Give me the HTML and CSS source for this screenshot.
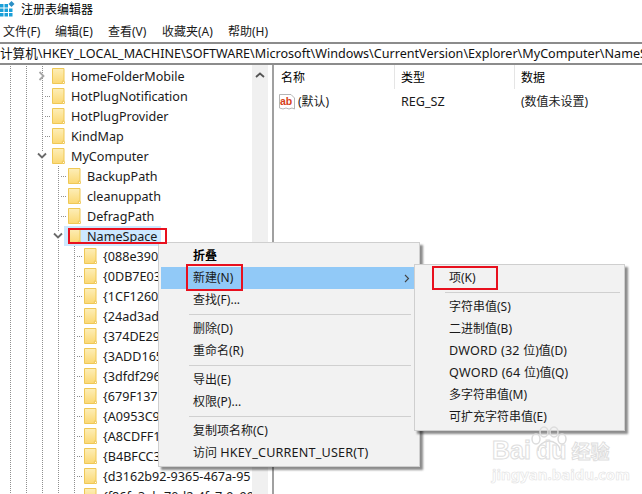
FILE: index.html
```html
<!DOCTYPE html>
<html lang="zh-CN">
<head>
<meta charset="utf-8">
<title>注册表编辑器</title>
<link rel="stylesheet" href="styles.css">
</head>
<body>
<svg class="defs" width="0" height="0" aria-hidden="true">
  <defs>
    <linearGradient id="fg" x1="0" y1="0" x2="0" y2="1">
      <stop offset="0" stop-color="#fdeeb8"/>
      <stop offset="1" stop-color="#fbd874"/>
    </linearGradient>
    <symbol id="folder" viewBox="0 0 13 16">
      <path d="M.5.5h11.5v12.8h-1.6v2.2H.5z" fill="url(#fg)" stroke="#efc855"/>
      <path d="M10.4 15.5v-2.2h2v2.2z" fill="#fff" stroke="#efc855"/>
    </symbol>
    <symbol id="chev-r" viewBox="0 0 8 10">
      <path d="M1.5 1l4 4-4 4" fill="none" stroke="#a6a6a6" stroke-width="1.8"/>
    </symbol>
    <symbol id="chev-d" viewBox="0 0 10 8">
      <path d="M1 1.5l4 4 4-4" fill="none" stroke="#6a6a6a" stroke-width="1.8"/>
    </symbol>
  </defs>
</svg>
<header class="title">
  <svg class="app-icon" width="15" height="16" viewBox="0 0 15 16">
    <path d="M0 3h3.5v3.5H0zM4.5 3H8v3.5H4.5zM0 7.5h3.5V11H0zM4.5 7.5H8V11H4.5zM9 7.500h3.500V11H9zM0 12h3.500v3.500H0zM4.500 12H8v3.500H4.500zM9 12h3.500v3.500H9z" fill="#1a9fd8"/>
    <path d="M11.500 0l3 3-3 3-3-3z" fill="#2c8fc4"/>
  </svg>
  <span>注册表编辑器</span>
</header>
<nav class="menubar">
  <span class="m1">文件(F)</span>
  <span class="m2">编辑(E)</span>
  <span class="m3">查看(V)</span>
  <span class="m4">收藏夹(A)</span>
  <span class="m5">帮助(H)</span>
</nav>
<div class="address">计算机\HKEY_LOCAL_MACHINE\SOFTWARE\Microsoft\Windows\CurrentVersion\Explorer\MyComputer\NameSpace</div>
<main class="main">
  <section class="tree">
    <div class="row d1"><svg class="tw r"><use href="#chev-r"/></svg><svg class="fd"><use href="#folder"/></svg><span class="lb">HomeFolderMobile</span></div>
    <div class="row d1"><i class="stub"></i><svg class="fd"><use href="#folder"/></svg><span class="lb">HotPlugNotification</span></div>
    <div class="row d1"><i class="stub"></i><svg class="fd"><use href="#folder"/></svg><span class="lb">HotPlugProvider</span></div>
    <div class="row d1"><i class="stub"></i><svg class="fd"><use href="#folder"/></svg><span class="lb">KindMap</span></div>
    <div class="row d1"><svg class="tw d"><use href="#chev-d"/></svg><svg class="fd"><use href="#folder"/></svg><span class="lb">MyComputer</span></div>
    <div class="row d2"><i class="stub"></i><svg class="fd"><use href="#folder"/></svg><span class="lb">BackupPath</span></div>
    <div class="row d2"><i class="stub"></i><svg class="fd"><use href="#folder"/></svg><span class="lb">cleanuppath</span></div>
    <div class="row d2"><i class="stub"></i><svg class="fd"><use href="#folder"/></svg><span class="lb">DefragPath</span></div>
    <div class="row d2 sel"><svg class="tw d"><use href="#chev-d"/></svg><span class="selbox"><svg class="fd"><use href="#folder"/></svg><span class="lb">NameSpace</span></span></div>
    <div class="row d3"><i class="stub"></i><svg class="fd"><use href="#folder"/></svg><span class="lb">{088e3905</span></div>
    <div class="row d3"><i class="stub"></i><svg class="fd"><use href="#folder"/></svg><span class="lb">{0DB7E03</span></div>
    <div class="row d3"><i class="stub"></i><svg class="fd"><use href="#folder"/></svg><span class="lb">{1CF1260</span></div>
    <div class="row d3"><i class="stub"></i><svg class="fd"><use href="#folder"/></svg><span class="lb">{24ad3ad</span></div>
    <div class="row d3"><i class="stub"></i><svg class="fd"><use href="#folder"/></svg><span class="lb">{374DE29</span></div>
    <div class="row d3"><i class="stub"></i><svg class="fd"><use href="#folder"/></svg><span class="lb">{3ADD165</span></div>
    <div class="row d3"><i class="stub"></i><svg class="fd"><use href="#folder"/></svg><span class="lb">{3dfdf296</span></div>
    <div class="row d3"><i class="stub"></i><svg class="fd"><use href="#folder"/></svg><span class="lb">{679F137</span></div>
    <div class="row d3"><i class="stub"></i><svg class="fd"><use href="#folder"/></svg><span class="lb">{A0953C9</span></div>
    <div class="row d3"><i class="stub"></i><svg class="fd"><use href="#folder"/></svg><span class="lb">{A8CDFF1</span></div>
    <div class="row d3"><i class="stub"></i><svg class="fd"><use href="#folder"/></svg><span class="lb">{B4BFCC3</span></div>
    <div class="row d3"><i class="stub"></i><svg class="fd"><use href="#folder"/></svg><span class="lb">{d3162b92-9365-467a-95</span></div>
    <div class="row d3"><i class="stub"></i><svg class="fd"><use href="#folder"/></svg><span class="lb">{f86fa3ab-70d2-4fc7-9c99</span></div>
  </section>
  <div class="scrollbar">
    <svg width="10" height="6" viewBox="0 0 10 6"><path d="M1 5l4-3.500 4 3.500" fill="none" stroke="#555" stroke-width="1.800"/></svg>
  </div>
  <section class="values">
    <div class="heads">
      <span class="col c1">名称</span>
      <span class="col c2">类型</span>
      <span class="col c3">数据</span>
    </div>
    <div class="val">
      <span class="c1 namecell">
        <svg class="ab" width="16" height="16" viewBox="0 0 16 16">
          <path d="M.5.5h11.500l3.500 3.500v11l-2.500-1-3 1-3-1-3 1-3.500-1z" fill="#fff" stroke="#b5b5b5"/>
          <text x="1" y="10.500" class="abt">ab</text>
        </svg>
        <span>(默认)</span>
      </span>
      <span class="c2 lat">REG_SZ</span>
      <span class="c3">(数值未设置)</span>
    </div>
  </section>
</main>

<div class="menu menu-main">
  <div class="item bold">折叠</div>
  <div class="item hot">新建(N)<svg class="arrow" width="6" height="9" viewBox="0 0 6 9"><path d="M1 1l3.500 3.500L1 8" fill="none" stroke="#444" stroke-width="1.100"/></svg></div>
  <div class="item">查找(F)...</div>
  <div class="sep"></div>
  <div class="item">删除(D)</div>
  <div class="item">重命名(R)</div>
  <div class="sep"></div>
  <div class="item">导出(E)</div>
  <div class="item">权限(P)...</div>
  <div class="sep"></div>
  <div class="item">复制项名称(C)</div>
  <div class="item">访问 <span class="wide">HKEY_CURRENT_USER(T)</span></div>
</div>
<div class="menu menu-sub">
  <div class="item">项(K)</div>
  <div class="sep"></div>
  <div class="item">字符串值(S)</div>
  <div class="item">二进制值(B)</div>
  <div class="item"><span class="wide">DWORD (32 </span>位)值(D)</div>
  <div class="item"><span class="wide">QWORD (64 </span>位)值(Q)</div>
  <div class="item">多字符串值(M)</div>
  <div class="item">可扩充字符串值(E)</div>
</div>

<div class="red red-ns"></div>
<div class="red red-new"></div>
<div class="red red-key"></div>

<div class="mark">
  <svg class="paw" width="38" height="26" viewBox="0 0 38 26"><g fill="none" stroke="#dcdcdc" stroke-width="1.500"><ellipse cx="6" cy="13" rx="4" ry="5"/><ellipse cx="14" cy="6" rx="4" ry="5"/><ellipse cx="24" cy="6" rx="4" ry="5"/><ellipse cx="32" cy="13" rx="4" ry="5"/><path d="M8 25c0-6 6-10 11-10s11 4 11 10"/></g></svg>
  <div class="mark-l1"><span>Bai</span><span class="du">du</span><span class="jy">经验</span></div>
  <div class="mark-l2">jingyan.baidu.com</div>
</div>
</body>
</html>
```
FILE: styles.css
```css
* { box-sizing: border-box; }
html, body { margin: 0; padding: 0; }
body {
  position: relative;
  width: 642px;
  height: 494px;
  overflow: hidden;
  background: #fff;
  color: #000;
  font: 12px/1 "Noto Sans", "Noto Sans CJK SC", sans-serif;
}
.defs { position: absolute; }

.title {
  height: 19px;
  display: flex;
  align-items: center;
  gap: 6px;
  font-size: 12px;
}
.app-icon { margin-top: -1px; flex: none; }

.menubar {
  height: 23px;
  display: flex;
  align-items: center;
  padding-top: 3px;
  padding-left: 3px;
  font-size: 12px;
  color: #1a1a1a;
}
.m1 { width: 52px; }
.m2 { width: 53px; }
.m3 { width: 54px; }
.m4 { width: 66px; }

.address {
  height: 23px;
  border-top: 2px solid #8c8c8c;
  border-bottom: 2px solid #8c8c8c;
  line-height: 19px;
  font-size: 12.6px;
  white-space: nowrap;
  overflow: hidden;
  color: #111;
}

.main {
  display: flex;
  height: 429px;
  overflow: hidden;
}

.tree {
  width: 252px;
  flex: none;
  overflow: hidden;
  padding-top: 1px;
  font-size: 12.6px;
  background-color: #fff;
}
.row {
  height: 20px;
  display: flex;
  align-items: center;
  white-space: nowrap;
  background-image:
    linear-gradient(#8f8f8f 50%, transparent 50%),
    linear-gradient(#8f8f8f 50%, transparent 50%),
    linear-gradient(#8f8f8f 50%, transparent 50%),
    linear-gradient(#8f8f8f 50%, transparent 50%),
    linear-gradient(#8f8f8f 50%, transparent 50%);
  background-size: 1px 2px;
  background-repeat: repeat-y;
}
.d1 { padding-left: 45px; background-position: 10px 0, 26px 0, 42px 0, -5px 0, -5px 0; }
.d2 { padding-left: 61px; background-position: 10px 0, 26px 0, 42px 0, 58px 0, -5px 0; }
.d3 { padding-left: 77px; background-position: 10px 0, 26px 0, 42px 0, 58px 0, 74px 0; }
.stub {
  width: 5px;
  margin-right: 2px;
  height: 1px;
  flex: none;
  background: repeating-linear-gradient(90deg, #8f8f8f 0 1px, transparent 1px 2px);
}
.tw { flex: none; margin-right: 0; }
.tw.r { width: 8px; height: 10px; margin-left: -7px; margin-right: 6px; }
.tw.d { width: 10px; height: 8px; margin-left: -8px; margin-right: 5px; background: #fff; }
.fd { width: 13px; height: 16px; flex: none; }
.lb { margin-left: 6px; padding-top: 2px; color: #1a1a1a; }
.selbox {
  display: flex;
  align-items: center;
  background: #cce8ff;
  height: 20px;
  margin-left: -4px;
  padding-left: 4px;
  padding-right: 4px;
}

.scrollbar {
  width: 16px;
  flex: none;
  background: #f0f0f0;
  display: flex;
  justify-content: center;
  padding-top: 7px;
}
.scrollbar svg { display: block; }

.values {
  flex: 1;
  margin-left: 4px;
  border-left: 2px solid #a0a0a0;
  font-size: 12px;
  min-width: 0;
}
.heads {
  height: 24px;
  display: flex;
  align-items: center;
}
.c1 { width: 120px; padding-left: 7px; flex: none; }
.c2 { width: 120px; padding-left: 7px; flex: none; }
.c3 { padding-left: 7px; }
.col { height: 24px; line-height: 26px; }
.col.c2, .col.c3 { border-left: 1px solid #e5e5e5; padding-left: 6px; }
.val {
  display: flex;
  height: 24px;
  padding-top: 2px;
  align-items: center;
  color: #1a1a1a;
}
.lat { font-size: 12.6px; }
.namecell { display: flex; align-items: center; gap: 3px; padding-left: 5px; }
.ab { flex: none; }
.abt { font: bold 10.500px "Liberation Sans", sans-serif; fill: #d6401a; }

.menu {
  position: absolute;
  background: #f2f2f2;
  border: 1px solid #cfcfcf;
  box-shadow: 3px 3px 2px rgba(0,0,0,.45);
  font-size: 12px;
  color: #1a1a1a;
}
.menu-main { left: 158px; top: 242px; width: 262px; height: 225px; padding: 2px 0 0 2px; }
.menu-sub { left: 414px; top: 264px; width: 211px; height: 167px; padding: 2px 2px 0 2px; }
.item {
  height: 22px;
  line-height: 22px;
  padding-left: 32px;
  position: relative;
  white-space: nowrap;
}
.wide { font-size: 12.6px; letter-spacing: .2px; }
.bold { font-weight: 700; color: #000; }
.hot { background: #91c9f7; }
.arrow { position: absolute; left: 243px; top: 7px; }
.sep { height: 7px; margin-left: 28px; margin-right: 8px; position: relative; }
.sep::after {
  content: "";
  position: absolute;
  left: 0; right: 0; top: 3px;
  height: 1px;
  background: #d0d0d0;
}
.menu-sub .sep { margin-right: 2px; }

.red { position: absolute; border: 2px solid #e8101e; }
.red-ns { left: 68px; top: 228px; width: 99px; height: 16px; }
.red-new { left: 186px; top: 264px; width: 57px; height: 27px; }
.red-key { left: 432px; top: 266px; width: 66px; height: 24px; }

.mark {
  position: absolute;
  left: 490px;
  top: 426px;
  width: 120px;
  height: 60px;
  color: transparent;
}
.paw { position: absolute; left: 40px; top: 0; }
.mark-l1 {
  position: absolute;
  left: 2px;
  top: 12px;
  font: 700 25px/1 "Liberation Sans", sans-serif;
  -webkit-text-stroke: 1px #dedede;
  white-space: nowrap;
}
.du { margin-left: 5px; }
.jy { margin-left: 5px; font: 700 19px/1 "Noto Sans CJK SC", sans-serif; }
.mark-l2 {
  position: absolute;
  left: 2px;
  top: 41px;
  font: 700 15px/1 "Noto Sans", sans-serif;
  -webkit-text-stroke: .6px #e2e2e2;
  white-space: nowrap;
}
```
